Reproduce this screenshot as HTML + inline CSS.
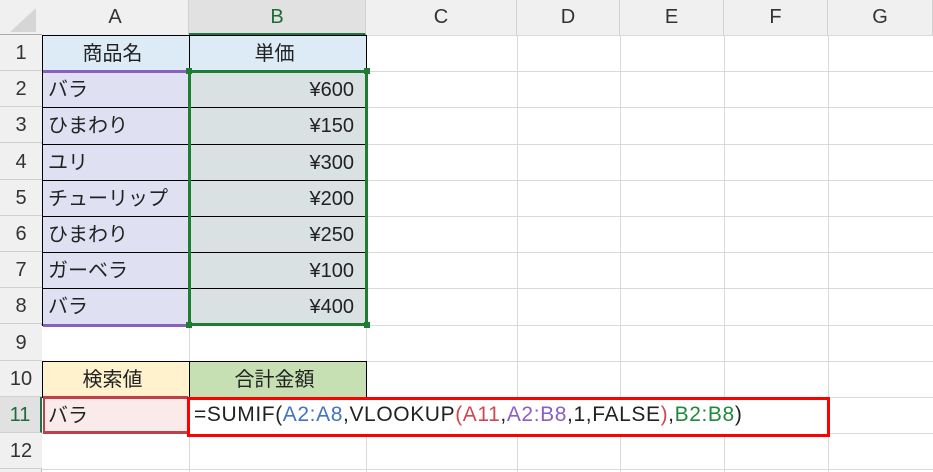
<!DOCTYPE html><html><head><meta charset="utf-8"><style>
body{margin:0;width:933px;height:472px;overflow:hidden;background:#fff;font-family:"Liberation Sans","Noto Sans CJK JP",sans-serif;position:relative}
div{position:absolute;box-sizing:border-box}
.h{background:#f0f0f0;color:#333;font-size:20px;text-align:center}
.t{font-size:20px;color:#222;line-height:36px;white-space:nowrap}
</style></head><body>
<script>
const cols=[42,189,366,517,620,724,828,933],names="ABCDEFG";
const T=i=>Math.round(35+(i-1)*36.2);
let h='';
for(let c=1;c<cols.length;c++)h+=`<div style="left:${cols[c]}px;top:0;width:1px;height:472px;background:#d9d9d9"></div>`;
for(let r=1;r<=13;r++)h+=`<div style="left:0;top:${T(r)}px;width:933px;height:1px;background:#d9d9d9"></div>`;
h+=`<div class="h" style="left:0;top:0;width:42px;height:472px;border-right:1px solid #bbb"></div>`;
h+=`<div style="left:0;top:0;width:933px;height:35px;background:#f0f0f0;border-bottom:1px solid #aaa"></div>`;
h+=`<div style="left:10px;top:8px;width:0;height:0;border-left:26px solid transparent;border-bottom:24px solid #d6d6d6"></div>`;
for(let c=0;c<7;c++){h+=`<div class="h" style="left:${cols[c]}px;top:0;width:${cols[c+1]-cols[c]}px;height:35px;line-height:35px;border-right:1px solid #d0d0d0;${c==1?'background:#e1e1e1;color:#1e6b3a;border-bottom:2px solid #217346':''}">${names[c]}</div>`}
for(let r=1;r<=12;r++)h+=`<div class="h" style="left:0;top:${T(r)}px;width:42px;height:36px;line-height:36px;border-bottom:1px solid #d0d0d0;${r==11?'background:#e1e1e1;color:#1e6b3a;border-right:2px solid #217346':''}">${r}</div>`;
function cell(c,r,txt,bg,align,extra){c=c-1;const x=cols[c]+1,y=T(r)+1;h+=`<div class="t" style="left:${x}px;top:${y}px;width:${cols[c+1]-cols[c]-1}px;height:${T(r+1)-T(r)-1}px;background:${bg};text-align:${align};padding:0 12px 0 5px;${extra||''}">${txt}</div>`}
cell(1,1,'商品名','#ddebf7','center');cell(2,1,'単価','#ddebf7','center');
const a=['バラ','ひまわり','ユリ','チューリップ','ひまわり','ガーベラ','バラ'],b=['600','150','300','200','250','100','400'];
for(let i=0;i<7;i++){cell(1,i+2,a[i],'#dfe0f2','left');cell(2,i+2,'¥'+b[i],'#d9e1e2','right')}
cell(1,10,'検索値','#fff2cc','center');cell(2,10,'合計金額','#c6e0b4','center');
cell(1,11,'バラ','#fbeaea','left');
const bl=(x,y,w,hh,c)=>h+=`<div style="left:${x}px;top:${y}px;width:${w}px;height:${hh}px;background:${c}"></div>`;
for(let r=1;r<=9;r++)bl(42,T(r),325,1,'#000');
bl(42,T(10),325,1,'#000');bl(42,T(11),325,1,'#000');
[42,189,366].forEach(x=>{bl(x,T(1),1,T(9)-T(1),'#000');bl(x,T(10),1,T(11)-T(10),'#000')});
bl(43,T(2)-1,145,3,'#8a5fc0');bl(43,T(9)-1,145,3,'#8a5fc0');
h+=`<div style="left:188px;top:${T(2)-1}px;width:180px;height:${T(9)-T(2)+2}px;border:3px solid #1e7d32"></div>`;
[[186,T(2)-3],[364,T(2)-3],[186,T(9)-3],[364,T(9)-3]].forEach(p=>bl(p[0],p[1],6,6,'#1e7d32'));
bl(43,T(11)-1,145,3,'#c0404a');bl(43,T(12)-2,145,3,'#c0404a');bl(43,T(11),2,T(12)-T(11),'#c0404a');
h+=`<div style="left:187px;top:397px;width:643px;height:40px;border:3px solid #f00;background:#fff"></div>`;
h+=`<div class="t" style="left:194px;top:${T(11)}px;font-size:21px;letter-spacing:0.6px">=SUMIF(<span style="color:#4472c4">A2:A8</span>,VLOOKUP<span style="color:#d0474f">(A11</span>,<span style="color:#8a5fc0">A2:B8</span>,1,FALSE<span style="color:#d0474f">)</span>,<span style="color:#1e8a3a">B2:B8</span>)</div>`;
document.body.innerHTML=h;
</script>
</body></html>
